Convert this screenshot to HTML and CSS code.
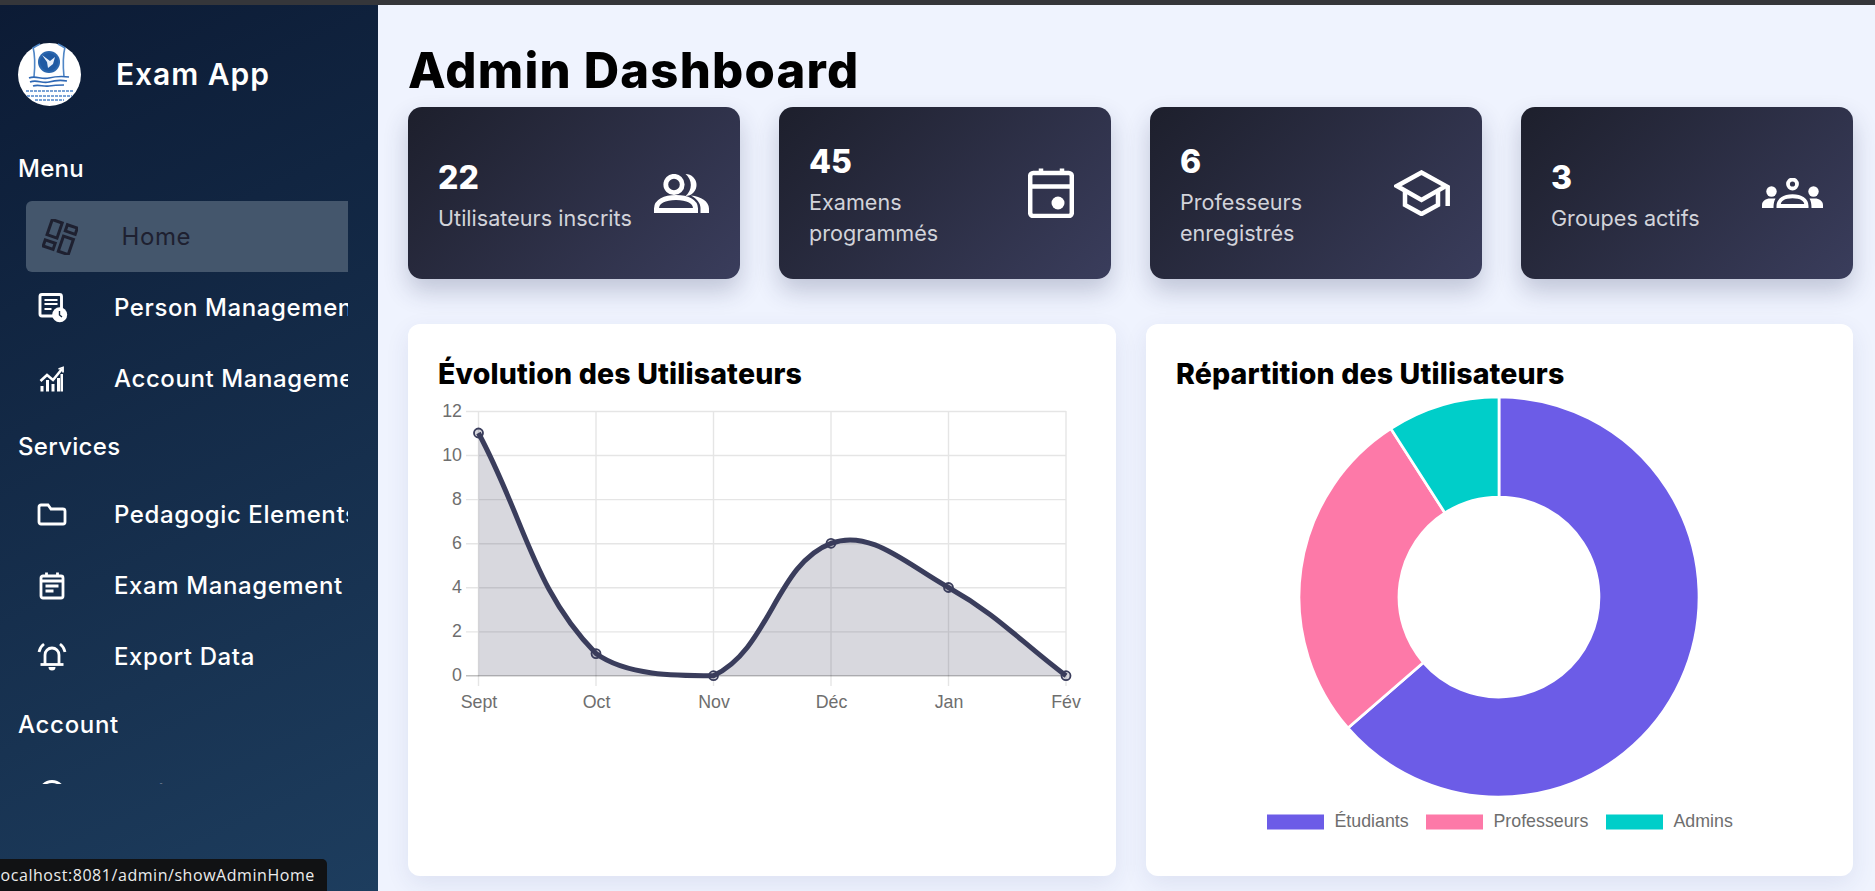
FILE: index.html
```html
<!DOCTYPE html>
<html lang="fr">
<head>
<meta charset="utf-8">
<title>Admin Dashboard</title>
<link rel="stylesheet" href="styles.css">
</head>
<body>
<div class="topstrip"></div>
<div class="app">
  <aside class="sidebar">
    <div class="brand">
      <svg class="logo" viewBox="0 0 63 63">
        <circle cx="31.5" cy="31.5" r="31.5" fill="#fff"/>
        <path d="M15 4c2 8 2 20 1 30M47 4c-2 8-2 20-1 30M15 5c3-2 5-3 7-4M47 5c-3-2-5-3-7-4" fill="none" stroke="#4f86c6" stroke-width="1.6"/>
        <circle cx="31" cy="19" r="11" fill="#2a66ad"/>
        <circle cx="31" cy="19" r="9" fill="#1f5aa3"/>
        <path d="M24 12l8 6 5-4-2 7-5 4-1-6z" fill="#e8f0fa"/>
        <path d="M11 35c7-3 12 2 20 0s12-2 20-1M12 39c7-3 12 2 19 0s12-2 18-1M15 43c6-2 10 1 16 0s10-1 15-1" fill="none" stroke="#2f68b4" stroke-width="1.7"/>
        <path d="M8 48h47M9 53h45M17 57h29" fill="none" stroke="#7aa3d6" stroke-width="2.2" stroke-dasharray="3 1"/>
      </svg>
      <span class="brand-name">Exam App</span>
    </div>
    <nav class="nav">
      <h4 class="nav-label">Menu</h4>
      <a class="nav-item active">
        <svg class="nav-icon" viewBox="0 0 36 36" fill="none" stroke="#1e2030" stroke-width="3"><g transform="rotate(19 18 18)"><rect x="5" y="4" width="10.500" height="16"/><rect x="21" y="4" width="10.500" height="6.500"/><rect x="5" y="25.500" width="10.500" height="6.500"/><rect x="21" y="16" width="10.500" height="16"/></g></svg>
        <span>Home</span>
      </a>
      <a class="nav-item">
        <svg class="nav-icon" viewBox="0 0 36 36" fill="none" stroke="#fff"><rect x="6" y="4.500" width="21.500" height="21.500" rx="2" stroke-width="2.900"/><path d="M10.500 10h13M10.500 14h13M10.500 19h7" stroke-width="2.200"/><circle cx="25.700" cy="24.700" r="7.500" fill="#fff" stroke="none"/><path d="M25.500 21v4l2.500 2" stroke="#12263f" stroke-width="1.400"/></svg>
        <span>Person Management</span>
      </a>
      <a class="nav-item">
        <svg class="nav-icon" viewBox="0 0 36 36" fill="none" stroke="#fff"><path d="M6.500 20l6.500-6 6 5 9-11" stroke-width="2.600"/><path d="M24.500 8l4.500-1.500v5" stroke-width="1.800"/><path d="M6.500 25h3v5.500h-3zM12 19h3v11.500h-3zM17.500 23h3v7.500h-3zM23 17h3v13.500h-3zM26.500 13h2.500v17.500h-2.500z" fill="#fff" stroke="none"/></svg>
        <span>Account Management</span>
      </a>
      <h4 class="nav-label nav-label-tight">Services</h4>
      <a class="nav-item">
        <svg class="nav-icon" viewBox="0 0 36 36" fill="none" stroke="#fff" stroke-width="2.800"><path d="M5 10a2 2 0 0 1 2-2h7l3 4h12a2 2 0 0 1 2 2v11a2 2 0 0 1-2 2H7a2 2 0 0 1-2-2z"/></svg>
        <span>Pedagogic Elements</span>
      </a>
      <a class="nav-item">
        <svg class="nav-icon" viewBox="0 0 36 36" fill="none" stroke="#fff" stroke-width="2.800"><rect x="7" y="8" width="22" height="22" rx="2"/><path d="M12.500 4.500v4M23.500 4.500v4M7 13h22M11.500 18h13M11.500 23h8"/></svg>
        <span>Exam Management</span>
      </a>
      <a class="nav-item">
        <svg class="nav-icon" viewBox="0 0 36 36" fill="none" stroke="#fff" stroke-width="2.800"><path d="M11 25v-9a7 7 0 0 1 14 0v9"/><path d="M6.500 25.500h23"/><path d="M14.500 28a3.500 3.500 0 0 0 7 0z" fill="#fff" stroke="none"/><path d="M5 13q1-5 5-8M31 13q-1-5-5-8"/></svg>
        <span>Export Data</span>
      </a>
      <h4 class="nav-label nav-label-flat">Account</h4>
      <a class="nav-item">
        <svg class="nav-icon" viewBox="0 0 36 36" fill="none" stroke="#fff" stroke-width="2.800"><circle cx="18" cy="18" r="12.500"/></svg>
        <span>Profile</span>
      </a>
    </nav>
  </aside>

  <main class="main">
    <h1 class="page-title">Admin Dashboard</h1>
    <section class="stats">
      <article class="stat">
        <div class="stat-text"><div class="stat-num">22</div><div class="stat-label">Utilisateurs inscrits</div></div>
        <svg class="icon-users" viewBox="0 0 55 39" fill="none"><circle cx="20" cy="10.500" r="8.200" stroke="#fff" stroke-width="4.800"/><path d="M31.500 0a11 11 0 0 1 0 22a14 14 0 0 0 0-22z" fill="#fff"/><path d="M2.500 36.500v-2c0-7 8-11 19.500-11s19.500 4 19.500 11v2z" stroke="#fff" stroke-width="5"/><path d="M37 21.500c10 1 18 6 18 13v4.500h-8.500v-5c0-5-4-9.500-9.500-12.500z" fill="#fff"/></svg>
      </article>
      <article class="stat">
        <div class="stat-text"><div class="stat-num">45</div><div class="stat-label">Examens programmés</div></div>
        <svg class="icon-cal" viewBox="0 0 46 50" fill="none" stroke="#fff" stroke-width="4.500"><rect x="2.200" y="5" width="41.600" height="43" rx="3"/><path d="M13 0.500v6M34 0.500v6M2 18.500h42"/><circle cx="30" cy="35" r="6.500" fill="#fff" stroke="none"/></svg>
      </article>
      <article class="stat">
        <div class="stat-text"><div class="stat-num">6</div><div class="stat-label">Professeurs enregistrés</div></div>
        <svg class="icon-cap" viewBox="0 0 56 46" fill="none" stroke="#fff" stroke-width="4.500"><path d="M27.500 2.500L3 16l24.500 14L52 16z"/><path d="M11 21.500v13.500l16.500 9 16.500-9V21.500M53.700 16v20"/></svg>
      </article>
      <article class="stat">
        <div class="stat-text"><div class="stat-num">3</div><div class="stat-label">Groupes actifs</div></div>
        <svg class="icon-group" viewBox="0 0 61 30" fill="none"><circle cx="30.500" cy="6" r="4.500" stroke="#fff" stroke-width="3.800"/><circle cx="9.500" cy="13.500" r="5.200" fill="#fff"/><circle cx="51.500" cy="13.500" r="5.200" fill="#fff"/><path d="M16.500 28c0-6 5.500-9.700 14-9.700s14 3.700 14 9.700z" stroke="#fff" stroke-width="4"/><path d="M0 30v-3c0-4 4-6.500 8-6.500h5.500c-1.500 2.500-2 5.500-2 9.500zM61 30v-3c0-4-4-6.500-8-6.500h-5.500c1.500 2.500 2 5.500 2 9.500z" fill="#fff"/></svg>
      </article>
    </section>
    <section class="charts">
      <article class="chart-card">
        <h3 class="chart-title title-left">Évolution des Utilisateurs</h3>
        <svg class="chart-svg" viewBox="439 395 646 330">
          <path class="grid" d="M466 411.500H1066M466 455.500H1066M466 499.600H1066M466 543.700H1066M466 587.800H1066M466 631.900H1066M478.500 411V686M596 411V686M713.500 411V686M831 411V686M948.500 411V686M1066 411V686"/>
          <path class="grid-axis" d="M466 675.700H1066"/>
          <path class="area" d="M478.500 433C525.500 521.200 532.400 588 596 653.600C626.400 675.700 675.600 675.700 713.500 675.700C769.600 649.400 776 563.900 831 543.300C870 528.700 905.200 563.100 948.500 587.500C999.300 616.100 1019 640.400 1066 675.700V675.700H478.500z"/>
          <path class="line" d="M478.500 433C525.500 521.200 532.400 588 596 653.600C626.400 675.700 675.600 675.700 713.500 675.700C769.600 649.400 776 563.900 831 543.300C870 528.700 905.200 563.100 948.500 587.500C999.300 616.100 1019 640.400 1066 675.700"/>
          <g class="pts">
            <circle cx="478.500" cy="433" r="4.500"/><circle cx="596" cy="653.600" r="4.500"/><circle cx="713.500" cy="675.700" r="4.500"/><circle cx="831" cy="543.300" r="4.500"/><circle cx="948.500" cy="587.500" r="4.500"/><circle cx="1066" cy="675.700" r="4.500"/>
          </g>
          <g class="ticks-y">
            <text x="462" y="416.500">12</text><text x="462" y="460.500">10</text><text x="462" y="504.600">8</text><text x="462" y="548.700">6</text><text x="462" y="592.800">4</text><text x="462" y="636.900">2</text><text x="462" y="681">0</text>
          </g>
          <g class="ticks-x">
            <text x="479" y="707.500">Sept</text><text x="596.500" y="707.500">Oct</text><text x="714" y="707.500">Nov</text><text x="831.500" y="707.500">Déc</text><text x="949" y="707.500">Jan</text><text x="1066" y="707.500">Fév</text>
          </g>
        </svg>
      </article>
      <article class="chart-card">
        <h3 class="chart-title title-left">Répartition des Utilisateurs</h3>
        <svg class="chart-svg donut" viewBox="1177 395 645 450">
          <g class="seg">
            <path class="seg-a" d="M1499 397A200 200 0 1 1 1347.900 728L1423.400 662.500A100 100 0 1 0 1499 497z"/>
            <path class="seg-b" d="M1347.900 728A200 200 0 0 1 1390.900 428.700L1444.900 512.900A100 100 0 0 0 1423.400 662.500z"/>
            <path class="seg-c" d="M1390.900 428.700A200 200 0 0 1 1499 397V497A100 100 0 0 0 1444.900 512.900z"/>
          </g>
          <rect class="key-a" x="1267" y="814.500" width="57" height="15"/>
          <text class="legend" x="1334.500" y="826.500">Étudiants</text>
          <rect class="key-b" x="1426" y="814.500" width="57" height="15"/>
          <text class="legend" x="1493.500" y="826.500">Professeurs</text>
          <rect class="key-c" x="1606" y="814.500" width="57" height="15"/>
          <text class="legend" x="1673.500" y="826.500">Admins</text>
        </svg>
      </article>
    </section>
  </main>
</div>
<div class="status"><span class="status-url">localhost:8081/admin/showAdminHome</span></div>
</body>
</html>
```
FILE: styles.css
```css
* { box-sizing: border-box; }
html, body { margin: 0; height: 891px; overflow: hidden; }
body { font-family: Inter, "Liberation Sans", sans-serif; background: #eff3fe; color: #000; }

.topstrip { height: 5px; background: #35363a; }
.app { display: flex; height: 886px; }

/* Sidebar */
.sidebar {
  width: 378px;
  flex: none;
  background: linear-gradient(155deg, #0c1b35 0%, #1d3d5e 100%);
  padding: 38px 30px 0 18px;
  color: #fff;
}
.brand { display: flex; align-items: center; gap: 35px; height: 63px; }
.logo { width: 63px; height: 63px; flex: none; }
.brand-name { font-size: 30px; font-weight: 600; letter-spacing: 0.95px; padding-bottom: 2px; }

.nav { height: 649px; margin-top: 29px; overflow: hidden; width: 330px; }
.nav-label {
  margin: 0;
  height: 66px;
  display: flex;
  align-items: center;
  font-size: 24px;
  font-weight: 500;
  letter-spacing: 0.3px;
  color: #fff;
  padding-top: 1px;
}
.nav-label-tight { height: 65px; padding-top: 0; }
.nav-label-flat { padding-top: 0; padding-bottom: 1px; letter-spacing: 0.7px; }
.nav-item {
  display: flex;
  align-items: center;
  gap: 44px;
  height: 71px;
  padding-left: 16px;
  font-size: 24px;
  font-weight: 500;
  letter-spacing: 0.6px;
  white-space: nowrap;
}
.nav-icon { width: 36px; height: 36px; flex: none; }
.nav-item.active {
  margin-left: 7.5px;
  background: #44566c;
  border-radius: 6px 0 0 6px;
  color: #1e2030;
  font-weight: 400;
}

/* Main */
.main { flex: 1; min-width: 0; padding: 33px 22px 0 30px; }
.page-title { margin: 0; height: 69px; font-size: 49px; line-height: 65px; font-weight: 800; letter-spacing: 1.2px; }

.stats { display: grid; grid-template-columns: repeat(4, 332px); column-gap: 39px; }
.stat {
  height: 172px;
  padding: 0 24px 0 30px;
  border-radius: 14px;
  background: linear-gradient(135deg, #1d1f2c 0%, #3a3d5c 100%);
  box-shadow: 0 12px 24px rgba(40, 50, 90, 0.24);
  display: flex;
  align-items: center;
  justify-content: space-between;
  color: #fff;
}
.stat-text { width: 210px; }
.stat-num { font-size: 32px; line-height: 49px; font-weight: 800; }
.stat-label { font-size: 21.6px; line-height: 31px; color: #d2d3da; padding-top: 1px; }
.icon-users { width: 55px; height: 39px; flex: none; margin-right: 7px; }
.icon-cal { width: 46px; height: 50px; flex: none; margin-right: 13px; }
.icon-cap { width: 56px; height: 46px; flex: none; margin-right: 8px; }
.icon-group { width: 61px; height: 30px; flex: none; margin-right: 6px; }

.charts { display: grid; grid-template-columns: 708px 707px; column-gap: 30px; margin-top: 45px; }
.chart-card {
  height: 552px;
  padding: 31px 31px 0;
  background: #fff;
  border-radius: 12px;
  box-shadow: 0 8px 24px rgba(40, 60, 120, 0.09);
}
.chart-title { margin: 0 0 4px; height: 36px; font-size: 28.5px; line-height: 38px; font-weight: 800; letter-spacing: 0.15px; white-space: nowrap; }
.title-left { margin-left: -1px; }
.chart-svg { display: block; width: 646px; height: 330px; overflow: visible; }
.donut { width: 645px; height: 450px; }

.grid { fill: none; stroke: rgba(0, 0, 0, 0.1); stroke-width: 1.4; }
.grid-axis { fill: none; stroke: rgba(0, 0, 0, 0.25); stroke-width: 1.4; }
.area { fill: rgba(58, 61, 92, 0.2); }
.line { fill: none; stroke: #3a3d5c; stroke-width: 5; }
.pts circle { fill: rgba(58, 61, 92, 0.2); stroke: #3a3d5c; stroke-width: 1.8; }
.ticks-y text, .ticks-x text { font-family: "Liberation Sans", Arial, sans-serif; font-size: 17.8px; fill: #6e6e6e; }
.ticks-y text { text-anchor: end; }
.ticks-x text { text-anchor: middle; }

.seg path { stroke: #fff; stroke-width: 2.7; }
.seg-a, .key-a { fill: #6c5ce7; }
.seg-b, .key-b { fill: #fd79a8; }
.seg-c, .key-c { fill: #00cec9; }
.legend { font-family: "Liberation Sans", Arial, sans-serif; font-size: 17.8px; fill: #6e6e6e; }

/* Browser link status bubble */
.status {
  position: fixed;
  left: 0;
  bottom: 0;
  width: 327px;
  height: 32px;
  background: #111214;
  border-top-right-radius: 5px;
  overflow: hidden;
  display: flex;
  align-items: center;
  white-space: nowrap;
}
.status-url { margin-left: -4px; font-family: "Open Sans", "Noto Sans", sans-serif; font-size: 16px; letter-spacing: 0.55px; color: #ececec; }
```
